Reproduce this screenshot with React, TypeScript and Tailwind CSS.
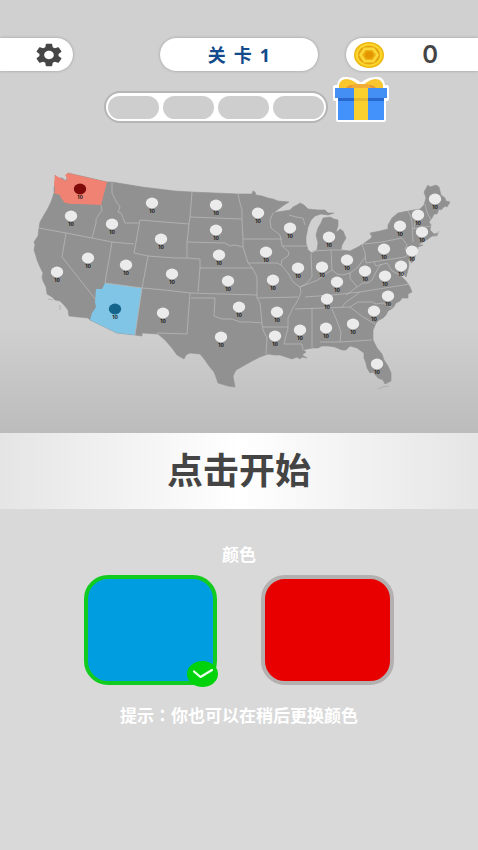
import { FC, useState } from 'react';
import { MdSettings } from 'react-icons/md';

type Region = { x: number; y: number; owner?: 'red' | 'blue' };

const REGIONS: Region[] = [
  { x: 80, y: 189, owner: 'red' },
  { x: 115, y: 309, owner: 'blue' },
  { x: 71, y: 216 }, { x: 112, y: 224 }, { x: 152, y: 203 }, { x: 161, y: 239 },
  { x: 88, y: 258 }, { x: 57, y: 272 }, { x: 126, y: 265 }, { x: 172, y: 274 },
  { x: 163, y: 313 }, { x: 216, y: 205 }, { x: 216, y: 230 }, { x: 219, y: 255 },
  { x: 228, y: 281 }, { x: 239, y: 307 }, { x: 221, y: 337 }, { x: 258, y: 213 },
  { x: 266, y: 252 }, { x: 273, y: 280 }, { x: 277, y: 312 }, { x: 275, y: 336 },
  { x: 290, y: 228 }, { x: 298, y: 268 }, { x: 300, y: 330 }, { x: 329, y: 237 },
  { x: 322, y: 267 }, { x: 347, y: 260 }, { x: 337, y: 282 }, { x: 327, y: 299 },
  { x: 326, y: 328 }, { x: 353, y: 324 }, { x: 374, y: 311 }, { x: 388, y: 296 },
  { x: 377, y: 364 }, { x: 365, y: 271 }, { x: 385, y: 276 }, { x: 384, y: 249 },
  { x: 400, y: 226 }, { x: 418, y: 215 }, { x: 422, y: 232 }, { x: 412, y: 251 },
  { x: 401, y: 266 }, { x: 435, y: 199 },
];

const LAND =
  'M55 175L58 178L62 178L66 181L68 173L107 182L112 182L142 187L175 191L192 192L238 194L252 194L253 191L255 192L256 195L262 196L268 198L273 199L278 201L289 202L284 205L280 208L273 213L277 212L284 211L290 210L293 207L297 205L300 203L304 205L308 209L318 210L325 210L328 213L334 213L328 215L321 214L315 216L311 220L308 227L306 237L306 243L308 250L312 253L317 250L318 243L316 235L318 228L321 223L323 218L330 217L334 219L338 220L338 226L336 232L338 231L340 229L343 231L346 238L342 245L341 250L350 251L358 247L363 244L370 239L372 237L370 233L380 231L388 229L388 225L392 218L398 213L408 211L420 209L424 205L426 198L424 192L428 185L430 187L436 185L439 187L441 195L445 198L446 201L450 202L447 207L445 206L441 210L439 209L437 214L434 214L432 218L429 222L431 225L430 230L432 232L434 234L438 233L437 236L432 236L428 239L418 245L423 245L418 247L417 251L415 257L412 263L410 261L408 259L409 265L408 270L406 277L403 273L401 268L401 276L406 281L408 284L410 287L412 292L408 294L408 298L402 298L400 301L396 303L393 308L388 311L386 315L383 318L379 320L376 323L373 330L373 340L377 348L382 354L384 360L388 366L391 373L391 381L385 384L383 380L378 378L373 372L370 373L367 368L366 363L364 358L364 353L357 348L350 346L346 350L342 350L335 347L328 346L322 346L318 348L313 348L307 349L303 350L306 352L302 355L307 358L302 357L300 359L297 357L292 359L286 357L280 355L274 355L268 354L260 357L252 361L245 365L236 370L233 376L235 387L228 386L218 383L216 377L214 372L209 366L205 360L200 354L190 353L186 355L184 359L177 355L172 348L165 340L158 334L142 333L142 336L135 335L117 333L90 320L88 318L69 316L68 310L64 305L60 301L55 300L52 297L47 294L46 287L43 281L42 277L43 273L40 267L37 260L36 256L34 250L35 245L34 242L38 236L39 228L40 222L44 215L47 210L51 202L54 193L54 187L56 183Z';

const BORDERS = [
  'M39 228L66 233L92 238L112 242L134 244M101 205L102 210L96 219L96 223L92 238',
  'M112 182L112 193L116 201L120 207L118 212L121 213L125 223L139 223M134 253L140 220L189 224',
  'M134 253L148 256L175 258L187 258L200 259V268H253M192 192L190 217L189 224L187 242V258',
  'M190 217L215 218L242 219M187 242L225 243L230 246L235 245L243 247',
  'M238 194L240 203L242 210V220L243 239L243 247L248 263L253 269L257 277V298L260 303L262 323L263 330L267 338L266 354',
  'M243 239H282M248 263L277 263L281 265M273 213L270 220L271 228L275 231L280 235L282 246H307',
  'M282 246L289 252L288 256L282 260L281 265L288 273L293 282L300 287L301 292L298 300L293 308L288 318V328L284 344H302L303 350',
  'M289 215L296 217L303 218L305 225M311 253L312 277L306 284L300 287L305 285L318 280L324 275L332 270L337 274L343 275L350 273L358 267L365 257',
  'M200 268L198 292M105 283L142 288L165 290L190 293L257 295M112 242L105 283M148 256L142 288L135 335',
  'M66 233L62 257L96 300M190 293L187 334L157 333M191 298H215L214 316L222 319L232 319L240 322L250 322L262 323',
  'M257 298L298 297M263 327H288M295 309L350 307L358 302H372L376 304L383 303L393 308M305 297L332 295L360 292L385 288L410 284',
  'M360 292L352 298L346 302L342 307M312 308L312 348M332 309L337 321L341 332L340 342L372 340M320 342H340',
  'M350 307L363 317L375 324M312 251L331 250L342 250M331 250L332 270M362 244L365 253L366 263L385 260L405 257',
  'M363 244L382 242L402 238L407 245L405 249L408 254L405 257M350 273L350 278L357 287L363 283L368 283L372 280L377 270L381 264',
  'M408 211L411 217L412 223L413 242M412 229L431 226M425 204L427 212L431 220M417 210L415 222L414 229M357 287L346 295M374 262L376 266L387 263L392 271L402 276',
];

const CoinIcon: FC = () => (
  <svg viewBox="0 0 30 26" className="h-[26px] w-[30px]" aria-hidden="true">
    <ellipse cx="15" cy="13" rx="15" ry="13" fill="#efb711" />
    <ellipse cx="15" cy="13" rx="13.4" ry="11.4" fill="#fbd62f" />
    <ellipse cx="15" cy="13" rx="11" ry="9.5" fill="#e6a60c" />
    <path d="M10 5.5h10l5 7.5-5 7.5H10L5 13z" fill="#fbd83b" />
    <path d="M11.5 8h7l3.5 5-3.5 5h-7L8 13z" fill="#eeb011" />
    <ellipse cx="15" cy="13" rx="4.2" ry="3.8" fill="#e39600" />
  </svg>
);

const GiftIcon: FC = () => (
  <svg viewBox="0 1 58 46" className="h-[46px] w-[58px]" aria-hidden="true">
    <path
      d="M7 11C7 4 11 2 16 3c5 0 9 3 13 6 4-3 8-6 13-6 6-1 9 1 9 8h4v12h-3v21H6V23H3V11z"
      fill="#fff"
      stroke="#fff"
      strokeWidth="4"
      strokeLinejoin="round"
    />
    <path d="M7 13C6 6 10 3 15 3c6 1 10 4 14 8 4-4 8-7 14-8 5 0 9 3 8 10z" fill="#f9c62f" />
    <path d="M14 12c2-3 6-4 10-2l5 3H14zM44 12c-2-3-6-4-10-2l-5 3h15z" fill="#e89b35" />
    <path d="M22 8h14l3 4H19z" fill="#f2ad36" />
    <path d="M6 22h46v22H6z" fill="#4391fa" />
    <path d="M6 22h46v3H6z" fill="#2867cb" />
    <path d="M3 12h52v10H3z" fill="#438ff4" />
    <path d="M22 12h14v32H22z" fill="#f9d02d" />
    <path d="M22 22h14v3H22z" fill="#e7b92c" />
  </svg>
);

const UsMap: FC = () => (
  <svg viewBox="0 160 478 240" className="block w-full" role="img" aria-label="地图">
    <path d={LAND} fill="#919191" stroke="#919191" strokeWidth="0.6" strokeLinejoin="round" />
    <path d="M433 236l4-1 2-4M413 259l-3 4M378 389l5-2 6-1M48 299l5 1M60 305v5" fill="none" stroke="#aaa" strokeWidth="0.8" />
    <path
      d="M55 175L60 178L66 181L67 178L65 175L68 173L107 182L101 205L80 204L72 204L65 203L61 198L60 195L54 193L55 190L54 184Z"
      fill="#f08273"
    />
    <path d="M105 283L142 288L135 335L117 333L90 320L92 313L96 307L95 302L96 289L102 289Z" fill="#80c5e6" />
    <path d={BORDERS.join('')} fill="none" stroke="#b8b8b8" strokeWidth="0.8" strokeLinejoin="round" />
    {REGIONS.map(({ x, y, owner }) => (
      <g key={`${x}-${y}`}>
        <ellipse
          cx={x}
          cy={y}
          rx="6.2"
          ry="5.4"
          fill={owner === 'red' ? '#7f0a0a' : owner === 'blue' ? '#14658c' : '#ebebeb'}
        />
        <text x={x} y={y + 10} textAnchor="middle" fill="#1a1a1a" className="font-['Inter',sans-serif] text-[5px] font-bold">
          10
        </text>
      </g>
    ))}
  </svg>
);

const SWATCHES = [
  { id: 'blue', label: '蓝色', fill: 'bg-[#009ee0]' },
  { id: 'red', label: '红色', fill: 'bg-[#e80000]' },
];

export default function App() {
  const [color, setColor] = useState('blue');

  return (
    <main className="flex min-h-screen flex-col bg-[#d9d9d9] font-['Noto_Sans','Noto_Sans_CJK_SC',sans-serif]">
      <section className="bg-linear-to-b from-[#d0d0d0] from-75% to-[#bcbcbc] pt-[38px] pb-[33px]">
        <header className="grid grid-cols-[1fr_158px_1fr] items-center">
          <button
            aria-label="设置"
            className="flex h-[33px] w-[73px] items-center justify-end rounded-r-full bg-white pr-2 shadow-[0_0_3px_#999]"
          >
            <MdSettings preserveAspectRatio="none" className="h-7 w-8 text-[#464646]" />
          </button>
          <h1 className="flex h-[33px] items-center justify-center gap-2 rounded-full bg-white text-lg font-bold text-[#124a8c] shadow-[0_0_3px_#999]">
            <span>关</span>
            <span>卡</span>
            <span>1</span>
          </h1>
          <div className="flex h-[33px] w-[132px] items-center justify-between justify-self-end rounded-l-full bg-white pr-10 pl-2 shadow-[0_0_3px_#999]">
            <CoinIcon />
            <span className="font-['Inter',sans-serif] text-2xl font-semibold text-[#444]">0</span>
          </div>
        </header>

        <div className="mt-1.5 flex items-end justify-center gap-1 pl-4">
          <div className="flex h-8 w-[224px] items-center justify-center gap-1 rounded-full border-2 border-[#b5b5b5] bg-white">
            {[0, 1, 2, 3].map((i) => (
              <span key={i} className="h-[23px] w-[51px] rounded-full bg-[#cecece]" />
            ))}
          </div>
          <button aria-label="礼物">
            <GiftIcon />
          </button>
        </div>

        <div className="mt-[37px]">
          <UsMap />
        </div>
      </section>

      <button className="h-[76px] w-full bg-linear-to-r from-[#e5e5e5] via-white to-[#e5e5e5] text-4xl font-bold text-[#444]">
        点击开始
      </button>

      <fieldset className="text-center">
        <legend className="w-full pt-[34px] text-[17px] leading-6 font-bold text-white">颜色</legend>
        <div className="mt-2 flex justify-center gap-11">
          {SWATCHES.map(({ id, label, fill }) => (
            <label key={id} className="relative">
              <input
                type="radio"
                name="color"
                aria-label={label}
                checked={color === id}
                onChange={() => setColor(id)}
                className={`block h-[110px] w-[133px] appearance-none rounded-3xl border-4 border-[#b5b0b0] checked:border-[#12cb20] ${fill}`}
              />
              {color === id && (
                <span className="absolute -right-px -bottom-0.5 flex h-[26px] w-[31px] items-center justify-center rounded-[50%] bg-[#00d20c]">
                  <svg viewBox="0 0 20 10" className="h-2.5 w-5" fill="none" stroke="#effff0" strokeWidth="2.2">
                    <path d="M1 2.5l6.5 5.5L19 1" strokeLinecap="round" strokeLinejoin="round" />
                  </svg>
                </span>
              )}
            </label>
          ))}
        </div>
        <p className="mt-[18px] text-[17px] leading-6 font-bold text-white">
          提示<span className="font-['Noto_Sans_CJK_TC',sans-serif]">：</span>你也可以在稍后更换颜色
        </p>
      </fieldset>
    </main>
  );
}
